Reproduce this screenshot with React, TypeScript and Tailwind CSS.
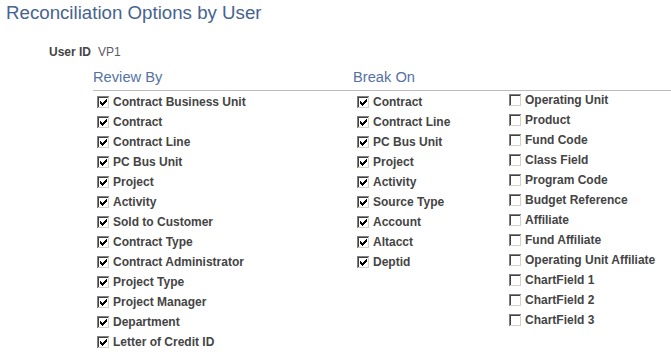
import React from 'react';

interface CheckItem {
  label: string;
  checked: boolean;
}

const reviewBy: CheckItem[] = [
  'Contract Business Unit',
  'Contract',
  'Contract Line',
  'PC Bus Unit',
  'Project',
  'Activity',
  'Sold to Customer',
  'Contract Type',
  'Contract Administrator',
  'Project Type',
  'Project Manager',
  'Department',
  'Letter of Credit ID',
].map((label) => ({ label, checked: true }));

const breakOnChecked: CheckItem[] = [
  'Contract',
  'Contract Line',
  'PC Bus Unit',
  'Project',
  'Activity',
  'Source Type',
  'Account',
  'Altacct',
  'Deptid',
].map((label) => ({ label, checked: true }));

const breakOnUnchecked: CheckItem[] = [
  'Operating Unit',
  'Product',
  'Fund Code',
  'Class Field',
  'Program Code',
  'Budget Reference',
  'Affiliate',
  'Fund Affiliate',
  'Operating Unit Affiliate',
  'ChartField 1',
  'ChartField 2',
  'ChartField 3',
].map((label) => ({ label, checked: false }));

// classic 3d checkbox, drawn pixel by pixel
const CheckBox: React.FC<{ checked: boolean }> = ({ checked }) => {
  const check = [
    [3, 5],
    [4, 6],
    [5, 7],
    [6, 6],
    [7, 5],
    [8, 4],
    [9, 3],
  ];
  return (
    <svg width="13" height="13" viewBox="0 0 13 13" shapeRendering="crispEdges" className="shrink-0">
      <rect x="0" y="0" width="13" height="13" fill="#ffffff" />
      <rect x="0" y="0" width="12" height="1" fill="#808080" />
      <rect x="0" y="0" width="1" height="12" fill="#808080" />
      <rect x="1" y="1" width="10" height="1" fill="#404040" />
      <rect x="1" y="1" width="1" height="10" fill="#404040" />
      <rect x="1" y="11" width="11" height="1" fill="#d4d0c8" />
      <rect x="11" y="1" width="1" height="11" fill="#d4d0c8" />
      {checked &&
        check.map(([x, y]) => <rect key={x} x={x} y={y} width="1" height="3" fill="#000000" />)}
    </svg>
  );
};

const CheckRow: React.FC<CheckItem> = ({ label, checked }) => (
  <div className="flex h-[20px] items-center">
    <CheckBox checked={checked} />
    <span className="ml-[3px] whitespace-nowrap text-[12px] font-bold leading-[20px] text-[#444444]">
      {label}
    </span>
  </div>
);

const GroupHeader: React.FC<{ title: string }> = ({ title }) => (
  <div className="h-[22px] border-b border-[#bcbcbc] text-[14.7px] leading-[17px] text-[#5572a4]">{title}</div>
);

const App: React.FC = () => {
  return (
    <div className="h-[357px] w-[671px] overflow-hidden bg-white font-['Liberation_Sans',Arial,sans-serif]">
      <h1 className="pl-[6px] pt-[2px] text-[18.7px] font-normal leading-[22px] text-[#46648f]">
        Reconciliation Options by User
      </h1>

      <div className="mt-[21px] flex pl-[49px] text-[12px] leading-[14px]">
        <span className="font-bold text-[#444444]">User ID</span>
        <span className="ml-[7px] text-[#5a5a66]">VP1</span>
      </div>

      <div className="mt-[10px] flex pl-[93px]">
        <div className="w-[260px]">
          <GroupHeader title="Review By" />
          <div className="pl-[4px] pt-px">
            {reviewBy.map((item) => (
              <CheckRow key={item.label} {...item} />
            ))}
          </div>
        </div>

        <div className="flex-1">
          <GroupHeader title="Break On" />
          <div className="flex pl-[4px]">
            <div className="w-[152px] pt-px">
              {breakOnChecked.map((item) => (
                <CheckRow key={item.label} {...item} />
              ))}
            </div>
            <div className="-mt-px">
              {breakOnUnchecked.map((item) => (
                <CheckRow key={item.label} {...item} />
              ))}
            </div>
          </div>
        </div>
      </div>
    </div>
  );
};

export default App;
